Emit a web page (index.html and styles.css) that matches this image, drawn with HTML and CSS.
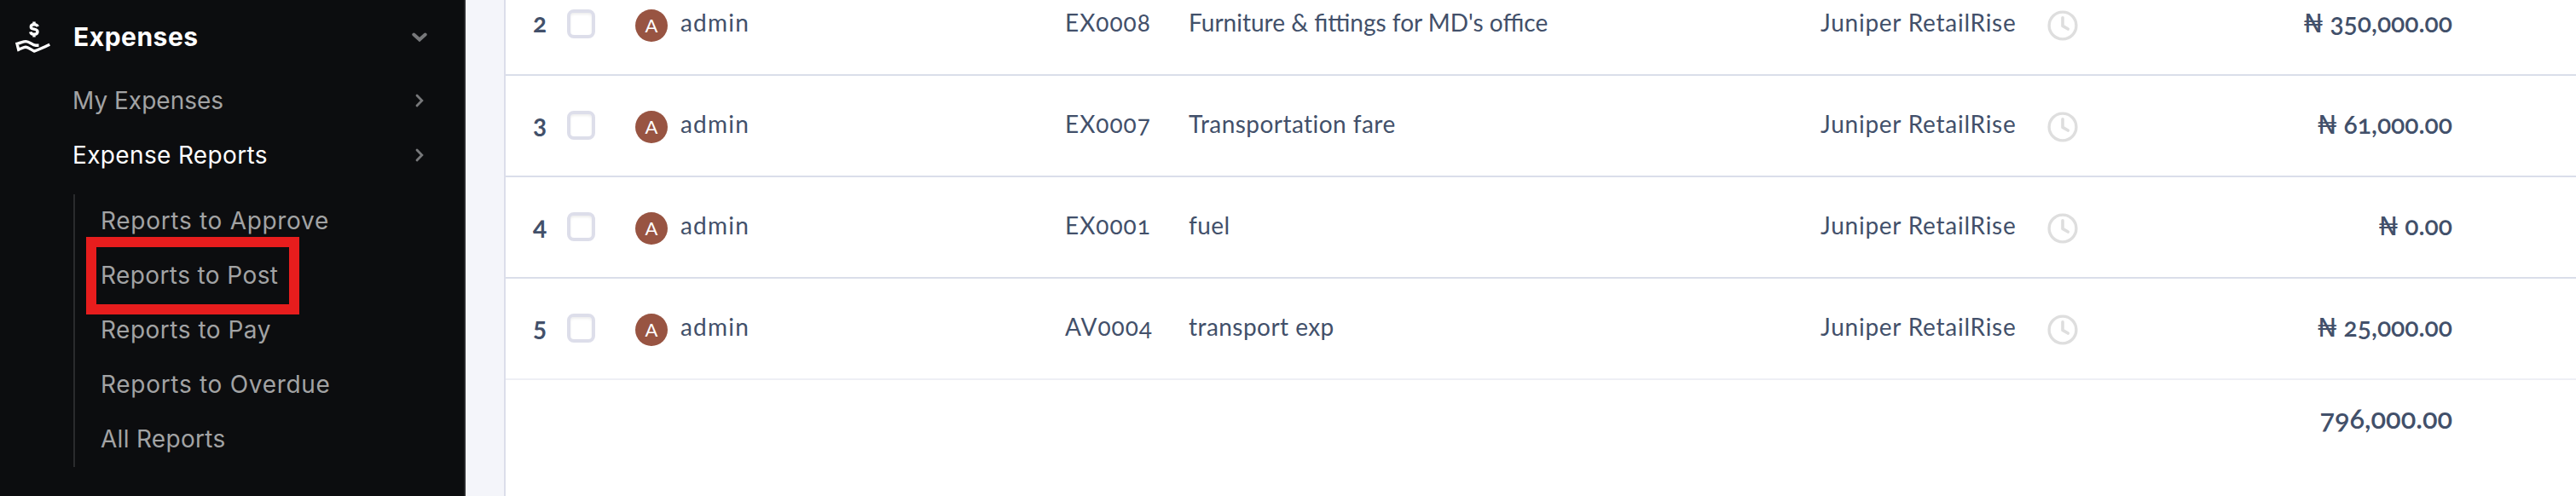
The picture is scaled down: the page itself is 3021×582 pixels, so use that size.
FILE: index.html
```html
<!DOCTYPE html>
<html lang="en">
<head>
<meta charset="utf-8">
<title>Expense Reports</title>
<link rel="stylesheet" href="styles.css">
</head>
<body>
<svg class="sprite" aria-hidden="true">
  <symbol id="clock" viewBox="0 0 36 36">
    <circle cx="18" cy="18" r="15.9" fill="none" stroke="#dedede" stroke-width="3.4"/>
    <path d="M18 8.7V18.4L24.2 22" fill="none" stroke="#dedede" stroke-width="3.6" stroke-linecap="round" stroke-linejoin="round"/>
  </symbol>
  <symbol id="chevron" viewBox="0 0 10 16">
    <path d="M2 2L7.8 8L2 14" fill="none" stroke="#77787a" stroke-width="2.8" stroke-linecap="round" stroke-linejoin="miter"/>
  </symbol>
</svg>
<div class="app">
  <nav class="sidebar">
    <div class="section">
      <svg class="section-icon" viewBox="0 0 42 38">
        <g fill="none" stroke="#fff" stroke-width="3.4">
          <path d="M27.3 7.2C26.6 5.3 25 4.8 23 4.8C20.700 4.800 19.300 5.900 19.300 7.700C19.300 11.500 27 8.700 27 13.200C27 15.200 25.300 16.300 23 16.300C20.700 16.300 19.100 15.400 18.700 13.400M23 1.500V5M23 16V19.500"/>
          <path d="M28.500 29.200H25C20.500 29.200 18 24.600 13.500 24.600C10 24.600 7.500 26.300 3 27.300L4.700 34.300C8.500 32.800 11 31.200 13 31.200C16 31.200 19 34 23 36C29 34.200 34.500 31.300 41.300 28.300"/>
        </g>
      </svg>
      <span class="section-title">Expenses</span>
      <svg class="section-chevron" viewBox="0 0 18 12"><path d="M2.300 2.500L9 8.500L15.700 2.500" fill="none" stroke="#77787a" stroke-width="4" stroke-linecap="round"/></svg>
    </div>
    <div class="link"><span class="link-text my">My Expenses</span><svg class="link-chevron"><use href="#chevron"/></svg></div>
    <div class="link active"><span class="link-text er">Expense Reports</span><svg class="link-chevron"><use href="#chevron"/></svg></div>
    <div class="submenu">
      <div class="subitem approve">Reports to Approve</div>
      <div class="subitem post">Reports to Post</div>
      <div class="subitem pay">Reports to Pay</div>
      <div class="subitem overdue">Reports to Overdue</div>
      <div class="subitem all">All Reports</div>
    </div>
  </nav>
  <main class="panel">
    <div class="row">
      <span class="num">2</span><span class="check"></span><span class="avatar">A</span><span class="user">admin</span>
      <span class="code">EX0008</span><span class="desc tight">Furniture &amp; fittings for MD's office</span>
      <span class="company">Juniper RetailRise</span><svg class="clock"><use href="#clock"/></svg><span class="amount">₦ 350,000.00</span>
    </div>
    <div class="row">
      <span class="num">3</span><span class="check"></span><span class="avatar">A</span><span class="user">admin</span>
      <span class="code">EX0007</span><span class="desc">Transportation fare</span>
      <span class="company">Juniper RetailRise</span><svg class="clock"><use href="#clock"/></svg><span class="amount">₦ 61,000.00</span>
    </div>
    <div class="row">
      <span class="num">4</span><span class="check"></span><span class="avatar">A</span><span class="user">admin</span>
      <span class="code">EX0001</span><span class="desc">fuel</span>
      <span class="company">Juniper RetailRise</span><svg class="clock"><use href="#clock"/></svg><span class="amount">₦ 0.00</span>
    </div>
    <div class="row last">
      <span class="num">5</span><span class="check"></span><span class="avatar">A</span><span class="user">admin</span>
      <span class="code">AV0004</span><span class="desc">transport exp</span>
      <span class="company">Juniper RetailRise</span><svg class="clock"><use href="#clock"/></svg><span class="amount">₦ 25,000.00</span>
    </div>
    <div class="total">796,000.00</div>
  </main>
</div>
</body>
</html>
```
FILE: styles.css
```css
*, *::after { box-sizing: border-box; }
body { margin: 0; background: #fff; overflow: hidden; }
.sprite { position: absolute; width: 0; height: 0; }

.app { display: flex; height: 582px; background: #f4f5fa; overflow: hidden; }

/* Sidebar */
.sidebar {
  width: 546px; flex: none;
  background: #0c0d0f; border-right: 2px solid #28292c;
  font-family: Inter, sans-serif; font-size: 28px; line-height: 64px;
  color: #a2a3a4; white-space: nowrap;
}
.section { display: flex; align-items: center; height: 86px; padding: 0 43px 0 17px; color: #fff; }
.section-icon { width: 42px; height: 38px; margin-right: 27px; }
.section-title { flex: 1; font-size: 30px; font-weight: 700; letter-spacing: 0.5px; }
.section-chevron { width: 18px; height: 12px; margin-top: 1px; }
.link { display: flex; align-items: center; justify-content: space-between; height: 64px; padding: 0 47px 0 85px; }
.link.active { color: #fff; }
.link-chevron { width: 10px; height: 16px; }
.my { letter-spacing: 0; }
.er { letter-spacing: 0.35px; }
.submenu { margin: 14px 0 0 86px; padding-left: 30px; height: 320px; border-left: 2px solid #2a2b2d; }
.subitem { position: relative; height: 64px; line-height: 62px; }
.approve { letter-spacing: 0.7px; }
.post { letter-spacing: 0.4px; }
.pay { letter-spacing: 0.5px; }
.overdue { letter-spacing: 0.7px; }
.all { letter-spacing: 0.3px; }
/* Highlight frame around the selected entry */
.post::after {
  content: ""; position: absolute; left: -17px; top: -14px;
  width: 250px; height: 91px; border: 12px solid #e71d1d;
}

/* Table */
.panel {
  flex: 1; min-width: 0; margin-left: 45px; padding: 0; overflow: hidden;
  background: #fff; border-left: 2px solid #dcdeea;
  font-family: Lato, sans-serif; font-size: 28px; line-height: 36px;
  font-variant-numeric: oldstyle-nums;
  color: #42506a; white-space: nowrap;
}
.row {
  display: grid;
  grid-template-columns: 40px 80px 52px 452px 145px 740px 267px 38px 1fr;
  align-items: start;
  height: 119px; padding: 38px 145px 0 32px;
  border-bottom: 2px solid #dadeea;
}
.row:first-child { margin-top: -30px; }
.row.last { border-bottom-color: #eeeff5; }
.num { font-size: 30px; font-weight: 700; }
.check {
  width: 33px; height: 34px; margin-top: 3px;
  border: 4px solid #dddeea; border-radius: 8px;
  box-shadow: inset 0 2px 3px #eee;
}
.avatar {
  width: 38px; height: 38px; margin-top: 3px; border-radius: 50%;
  background: #985442; color: #fff; text-align: center;
  font-size: 22px; line-height: 38px;
}
.user { padding-left: 1px; letter-spacing: 1.2px; }
.code { letter-spacing: 1px; }
.desc { letter-spacing: 0.45px; }
.tight { letter-spacing: 0; }
.company { letter-spacing: 0.75px; padding-left: 1px; }
.clock { width: 36px; height: 36px; margin-top: 4px; }
.amount { text-align: right; font-size: 30px; font-weight: 600; }
.total { padding: 25px 145px 0 0; text-align: right; font-size: 32.500px; font-weight: 600; line-height: 40px; }
```
